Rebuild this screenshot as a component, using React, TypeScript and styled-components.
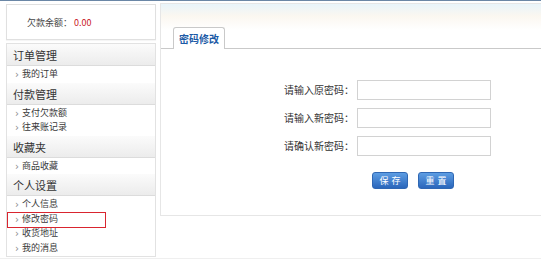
import React from "react";
import styled, { createGlobalStyle } from "styled-components";

const GlobalStyle = createGlobalStyle`
  html, body { margin: 0; padding: 0; background: #fff; overflow: hidden; }
  body { font-family: "Noto Sans CJK SC", "Liberation Sans", sans-serif; color: #333; }
  * { box-sizing: border-box; }
`;

const TopLine = styled.div`
  height: 1px;
  background: #6b87a6;
`;

const Layout = styled.div`
  display: flex;
  align-items: flex-start;
  gap: 4px;
  padding: 2px 0 1px 6px;
  border-bottom: 1px solid #efefef;
`;

const Sidebar = styled.aside`
  width: 150px;
  flex: none;
  display: flex;
  flex-direction: column;
  gap: 3px;
  margin-top: 1px;
`;

const BalanceBox = styled.div`
  height: 36px;
  border: 1px solid #e0e0e0;
  box-shadow: 0 1px 1px rgba(0, 0, 0, 0.04);
  display: flex;
  align-items: center;
  padding-left: 20px;
  font-size: 9px;
  color: #444;
`;

const Amount = styled.span`
  color: #c8161d;
  margin-left: 2px;
`;

const Menu = styled.nav`
  border: 1px solid #e2e2e2;
  background: #fff;
`;

const SectionHeader = styled.div`
  height: 22px;
  line-height: 22px;
  padding-left: 6px;
  font-size: 11px;
  color: #333;
  background: linear-gradient(#fbfbfb, #ececec);
  border-bottom: 1px solid #dcdcdc;
`;

const ItemList = styled.ul`
  list-style: none;
  margin: 0;
  padding: 1px 0;
`;

const Item = styled.li<{ $active?: boolean }>`
  position: relative;
  height: 14.5px;
  line-height: 14.5px;
  padding-left: 15px;
  font-size: 9px;
  color: #3a3a3a;
  &::before {
    content: "›";
    position: absolute;
    left: 8px;
    top: 1px;
    font-family: "DejaVu Sans", sans-serif;
    font-size: 10px;
    line-height: 14.5px;
    color: #8a8a8a;
  }
  ${(p) =>
    p.$active &&
    `
    &::after {
      content: "";
      position: absolute;
      left: 0;
      top: 0.5px;
      width: 97px;
      height: 14px;
      border: 1px solid #d9252f;
    }
  `}
`;

const Main = styled.main`
  flex: 1;
  height: 213px;
  border: 1px solid #e6e6e6;
  border-right: none;
`;

const MainHead = styled.div`
  padding-top: 23px;
  background: linear-gradient(#e8f4fa 0px, #fbf7f0 12px, #ffffff 26px);
`;

const TabBar = styled.div`
  display: flex;
  padding-left: 12px;
  height: 22px;
  border-bottom: 1px solid #c9c9c9;
`;

const Tab = styled.div`
  width: 52px;
  height: 22px;
  margin-bottom: -1px;
  background: #fff;
  border: 1px solid #c9c9c9;
  border-bottom: none;
  border-radius: 3px 3px 0 0;
  font-size: 10px;
  font-weight: bold;
  color: #1b5aa6;
  text-align: center;
  line-height: 21px;
`;

const Form = styled.form`
  display: grid;
  grid-template-columns: 100px 134px;
  column-gap: 3px;
  row-gap: 8px;
  margin-top: 31px;
  padding-left: 93px;
`;

const Label = styled.label`
  text-align: right;
  font-size: 10px;
  line-height: 20px;
  color: #333;
`;

const Input = styled.input`
  height: 20px;
  border: 1px solid #d2d2d2;
  background: #fff;
  margin: 0;
  padding: 0 3px;
`;

const Buttons = styled.div`
  display: flex;
  gap: 10px;
  margin-top: 16px;
  padding-left: 211px;
`;

const Button = styled.button`
  width: 36px;
  height: 17px;
  padding: 0;
  border: 1px solid #2f67b3;
  border-radius: 3px;
  background: linear-gradient(#5d9de3, #2a66bb);
  color: #fff;
  font-family: inherit;
  font-size: 9px;
  letter-spacing: 3px;
  text-indent: 3px;
  line-height: 15px;
`;

const sections: { title: string; items: string[] }[] = [
  { title: "订单管理", items: ["我的订单"] },
  { title: "付款管理", items: ["支付欠款额", "往来账记录"] },
  { title: "收藏夹", items: ["商品收藏"] },
  { title: "个人设置", items: ["个人信息", "修改密码", "收货地址", "我的消息"] },
];

const fields = ["请输入原密码：", "请输入新密码：", "请确认新密码："];

export default function App() {
  return (
    <>
      <GlobalStyle />
      <TopLine />
      <Layout>
        <Sidebar>
          <BalanceBox>
            欠款余额：<Amount>0.00</Amount>
          </BalanceBox>
          <Menu>
            {sections.map((s) => (
              <React.Fragment key={s.title}>
                <SectionHeader>{s.title}</SectionHeader>
                <ItemList>
                  {s.items.map((it) => (
                    <Item key={it} $active={it === "修改密码"}>
                      {it}
                    </Item>
                  ))}
                </ItemList>
              </React.Fragment>
            ))}
          </Menu>
        </Sidebar>
        <Main>
          <MainHead>
            <TabBar>
              <Tab>密码修改</Tab>
            </TabBar>
          </MainHead>
          <Form onSubmit={(e) => e.preventDefault()}>
            {fields.map((f) => (
              <React.Fragment key={f}>
                <Label>{f}</Label>
                <Input type="password" />
              </React.Fragment>
            ))}
          </Form>
          <Buttons>
            <Button type="button">保存</Button>
            <Button type="button">重置</Button>
          </Buttons>
        </Main>
      </Layout>
    </>
  );
}
